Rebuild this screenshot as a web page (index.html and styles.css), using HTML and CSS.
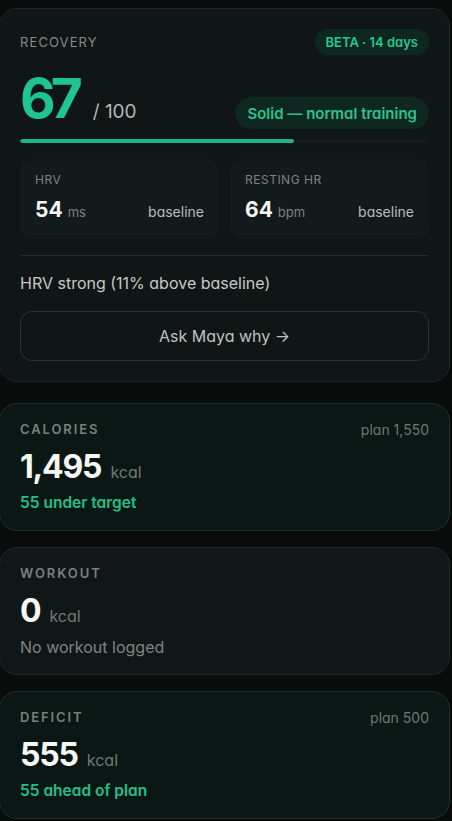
FILE: index.html
```html
<!DOCTYPE html>
<html>
<head>
<meta charset="utf-8">
<link rel="stylesheet" href="styles.css">
</head>
<body>
<div class="stack">
  <section class="card recovery">
    <div class="head">
      <span class="rlabel">RECOVERY</span>
      <span class="pill beta">BETA · 14 days</span>
    </div>
    <div class="scorerow">
      <div class="score"><span class="big">67</span><span class="outof">/ 100</span></div>
      <span class="pill status">Solid — normal training</span>
    </div>
    <div class="bar"><div class="fill" style="width:67%"></div></div>
    <div class="metrics">
      <div class="metric">
        <div class="mlabel">HRV</div>
        <div class="mrow"><span class="mval">54<span class="munit">ms</span></span><span class="mbase">baseline</span></div>
      </div>
      <div class="metric">
        <div class="mlabel">RESTING HR</div>
        <div class="mrow"><span class="mval">64<span class="munit">bpm</span></span><span class="mbase">baseline</span></div>
      </div>
    </div>
    <div class="divider"></div>
    <p class="note">HRV strong (11% above baseline)</p>
    <button class="ask">Ask Maya why →</button>
  </section>

  <section class="card stat green">
    <div class="shead"><span class="slabel">CALORIES</span><span class="plan">plan 1,550</span></div>
    <div class="sval"><span class="num">1,495</span><span class="unit">kcal</span></div>
    <div class="ssub good">55 under target</div>
  </section>

  <section class="card stat plain">
    <div class="shead"><span class="slabel">WORKOUT</span></div>
    <div class="sval"><span class="num">0</span><span class="unit">kcal</span></div>
    <div class="ssub muted">No workout logged</div>
  </section>

  <section class="card stat green">
    <div class="shead"><span class="slabel">DEFICIT</span><span class="plan">plan 500</span></div>
    <div class="sval"><span class="num">555</span><span class="unit">kcal</span></div>
    <div class="ssub good">55 ahead of plan</div>
  </section>
</div>
</body>
</html>
```
FILE: styles.css
```css
* { box-sizing: border-box; }
html, body { background: #0a0c0c; }
body {
  margin: 8px 0 0 0;
  font-family: Inter, "Noto Sans", sans-serif;
  font-feature-settings: "cv11" 1;
  color: #e8ecea;
}
.stack {
  display: flex;
  flex-direction: column;
  margin-left: -1px;
  width: 451px;
}
.card {
  border-radius: 18px;
  border: 1px solid #1f2628;
  padding: 0 20px;
}
.recovery {
  background: #101516;
  padding-top: 20px;
  padding-bottom: 20px;
  margin-bottom: 21px;
}
.head {
  display: flex;
  justify-content: space-between;
  align-items: center;
  height: 26px;
}
.rlabel {
  font-size: 13px;
  letter-spacing: 1.1px;
  color: #858c89;
}
.pill {
  background: #0f2721;
  color: #2ac48d;
  font-weight: 600;
  border-radius: 999px;
  display: inline-flex;
  align-items: center;
}
.beta {
  height: 26px;
  padding: 0 11px;
  font-size: 13px;
}
.scorerow {
  display: flex;
  justify-content: space-between;
  align-items: flex-end;
  margin-top: 15px;
}
.score {
  display: flex;
  align-items: baseline;
  margin-bottom: 3px;
}
.big {
  font-size: 55px;
  line-height: 56px;
  font-weight: 700;
  color: #1ec491;
  letter-spacing: -5px;
}
.outof {
  font-size: 19px;
  color: #b3b9b6;
  margin-left: 15px;
}
.status {
  height: 32px;
  padding: 0 12px;
  font-size: 15px;
}
.bar {
  margin-top: 10px;
  height: 4px;
  border-radius: 2px;
  background: #151b1c;
  overflow: hidden;
}
.fill {
  height: 100%;
  background: #1bb488;
  border-radius: 2px;
}
.metrics {
  display: grid;
  grid-template-columns: 1fr 1fr;
  gap: 11px;
  margin-top: 16px;
}
.metric {
  background: #131a1b;
  border-radius: 12px;
  padding: 14px 15px 16px;
}
.mlabel {
  font-size: 12px;
  line-height: 14px;
  letter-spacing: 0.5px;
  color: #7b8380;
}
.mrow {
  margin-top: 10px;
  display: flex;
  justify-content: space-between;
  align-items: baseline;
  height: 26px;
  line-height: 26px;
}
.mval {
  font-size: 21px;
  font-weight: 700;
  color: #f4f6f5;
}
.munit {
  font-size: 13px;
  font-weight: 400;
  color: #7b8380;
  margin-left: 5px;
}
.mbase {
  font-size: 14px;
  color: #b7bdba;
}
.divider {
  height: 1px;
  background: #232a2b;
  margin-top: 16px;
}
.note {
  margin: 16px 0 0;
  font-size: 16px;
  line-height: 22px;
  color: #c4c9c6;
}
.ask {
  display: block;
  width: 100%;
  margin-top: 17px;
  height: 50px;
  background: transparent;
  border: 1px solid #2a3234;
  border-radius: 12px;
  font-family: inherit;
  font-feature-settings: "cv11" 1;
  font-size: 16px;
  color: #bdc3c0;
}
.stat {
  padding-top: 17px;
  padding-bottom: 17px;
  margin-bottom: 16px;
}
.green {
  background: #0a1714;
  border-color: #15352b;
}
.plain {
  background: #111718;
  border-color: #20282a;
}
.shead {
  display: flex;
  justify-content: space-between;
  align-items: center;
  height: 16px;
}
.slabel {
  font-size: 13px;
  font-weight: 600;
  letter-spacing: 1.9px;
  color: #78807c;
}
.plan {
  font-size: 14px;
  color: #6f7773;
}
.sval {
  margin-top: 12px;
  display: flex;
  align-items: baseline;
  height: 36px;
  line-height: 36px;
}
.num {
  font-size: 32px;
  font-weight: 700;
  color: #f5f7f6;
  letter-spacing: -1.2px;
}
.unit {
  font-size: 16px;
  color: #717975;
  margin-left: 9px;
}
.ssub {
  margin-top: 8px;
  font-size: 15.5px;
  line-height: 20px;
}
.good { color: #22c089; font-weight: 600; }
.muted { color: #7d8581; font-size: 16px; }
```
